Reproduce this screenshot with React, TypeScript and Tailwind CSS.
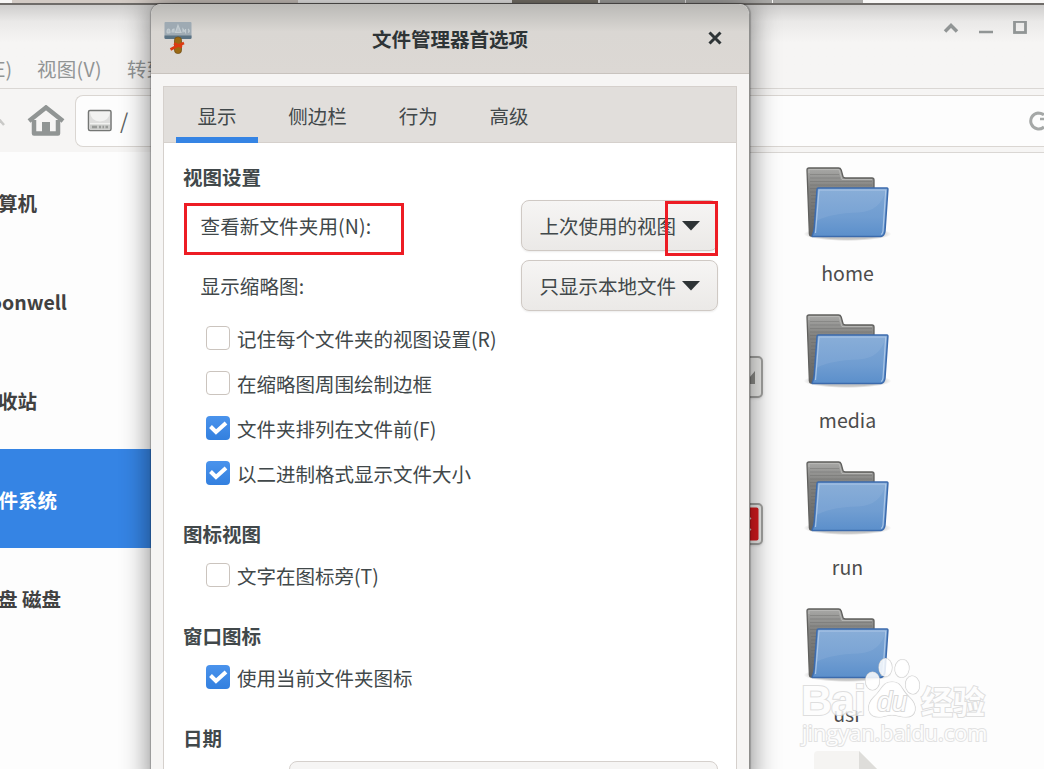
import type { ReactNode } from 'react';

type Place = {
  label: string;
  width: string;
  selected?: boolean;
};

const places: Place[] = [
  { label: '算机', width: 'w-[37px]' },
  { label: 'oonwell', width: 'w-[67px]' },
  { label: '收站', width: 'w-[37px]' },
  { label: '件系统', width: 'w-[57px]', selected: true },
  { label: '盘 磁盘', width: 'w-[61px]' },
];

type Emblem = 'link' | 'denied' | null;

// emblem belongs to the item left of the folder, one row down
const folders: { name: string; emblem: Emblem }[] = [
  { name: 'home', emblem: 'link' },
  { name: 'media', emblem: 'denied' },
  { name: 'run', emblem: null },
  { name: 'usr', emblem: null },
];

const tabs = ['显示', '侧边栏', '行为', '高级'];

function FolderIcon() {
  return (
    <svg width="90" height="80" viewBox="0 0 90 80" aria-hidden="true">
      <defs>
        <linearGradient id="folder-back" x1="0" y1="0" x2="0" y2="1">
          <stop offset="0" stopColor="#a9a9a7" />
          <stop offset="0.3" stopColor="#828280" />
          <stop offset="1" stopColor="#646462" />
        </linearGradient>
        <linearGradient id="folder-front" x1="0" y1="0" x2="0" y2="1">
          <stop offset="0" stopColor="#80a8d5" />
          <stop offset="0.6" stopColor="#709dd1" />
          <stop offset="1" stopColor="#5b8fcb" />
        </linearGradient>
        <radialGradient id="folder-shadow">
          <stop offset="0.75" stopColor="#000" stopOpacity="0.22" />
          <stop offset="1" stopColor="#000" stopOpacity="0" />
        </radialGradient>
      </defs>
      <ellipse cx="44.500" cy="69" rx="44" ry="7" fill="url(#folder-shadow)" />
      <path d="M4 5Q4 3 6 3H35.500Q37.500 3 38.200 5L40 11.500Q40.500 13 42.500 13H69Q71 13 71 15V30H25L11 71H8Q6.500 71 6.400 69Z" fill="url(#folder-back)" stroke="#60605e" strokeWidth="1.300" />
      <path d="M6 8V4.500H36L39 14.500H69" fill="none" stroke="#b9b9b7" strokeWidth="0.900" />
      <path d="M7 9.500H36M7 13H37M7 16.500H69M7 20H69M7 23.500H14M7 27H14M8 30.500H13M8 34H13M8 37.500H13M8 41H13M8 44.500H12M8 48H12M8 51.500H12M9 55H12M9 58.500H12" stroke="#666664" strokeWidth="0.700" opacity="0.5" />
      <path d="M15.500 23H84Q85 23 84.900 24.500L82 66Q81.500 71 78 71.500H10Q8.500 72 9.800 69Q11 66 11.300 62L14 24.500Q14.100 23 15.500 23Z" fill="url(#folder-front)" stroke="#3c6bad" strokeWidth="1.500" />
      <path d="M16 25H82.500Q78 46 56 47.500Q28 48 13.500 56Z" fill="#fff" opacity="0.07" />
      <path d="M12.500 68L16 25H82.700L80 66Q79.500 69 78 69.500" fill="none" stroke="#b4cdea" strokeWidth="1.200" opacity="0.85" />
    </svg>
  );
}

function FolderItem({ name, emblem }: { name: string; emblem: Emblem }) {
  return (
    <div className="flex h-[147px]">
      <div className="relative w-[147px]">
        {emblem && (
          <div className="absolute top-[191px] left-[95px] flex h-[42px] w-[41px] items-center justify-end rounded-[5px] border-2 border-[#a3a3a1] bg-[#eeeeec] shadow-sm">
            {emblem === 'link' ? (
              <svg width="20" height="20" viewBox="0 0 20 20" aria-hidden="true">
                <path d="M14 4V17H3Z" fill="#8c8c89" />
              </svg>
            ) : (
              <svg width="37" height="38" viewBox="0 0 37 38" className="shrink-0" aria-hidden="true">
                <rect x="1" y="2.500" width="33.500" height="33" rx="2" fill="#d81a1e" />
                <path d="M12 12L26 26M26 12L12 26" stroke="#eeeeec" strokeWidth="4" />
              </svg>
            )}
          </div>
        )}
      </div>
      <div className="flex w-[147px] flex-col items-center">
        <FolderIcon />
        <span className="mt-[13px] flex h-[30px] items-center text-[#4c4c4c]">{name}</span>
      </div>
    </div>
  );
}

function HomeIcon() {
  return (
    <svg width="38" height="32" viewBox="0 0 38 32" aria-hidden="true">
      <path d="M2 16L19 2.500L36 16" fill="none" stroke="#919594" strokeWidth="4.500" />
      <path d="M7 15V28.500H31V15" fill="none" stroke="#919594" strokeWidth="4.500" strokeLinejoin="round" />
      <rect x="15" y="17" width="8" height="12" fill="#919594" />
    </svg>
  );
}

function DriveIcon() {
  return (
    <svg width="26" height="24" viewBox="0 0 26 24" aria-hidden="true">
      <rect x="1.500" y="1.500" width="22.500" height="20" rx="1.500" fill="#f2f2f1" stroke="#747674" strokeWidth="1.500" />
      <path d="M3 3.500Q4 12 13 12.500Q22 12 23 3.500V14H3Z" fill="#dededd" />
      <rect x="3" y="15.500" width="20" height="4.500" fill="#cacbc9" />
      <path d="M5 18H10M12 18H14M15.500 18H17M18.500 18H21" stroke="#999b99" strokeWidth="2.500" />
    </svg>
  );
}

function FileManagerIcon() {
  return (
    <svg width="30" height="36" viewBox="0 0 30 36" aria-hidden="true">
      <rect x="1.500" y="2" width="27" height="17" rx="1" fill="#9eaab3" />
      <path d="M1.500 15.500H28.500V17.500Q28.500 19 27 19H3Q1.500 19 1.500 17.500Z" fill="#5b7384" />
      <path d="M4 12.500Q4 9 5.500 9T7 12.500Q5 13.500 4 12.500M9 12.500Q9 9 11 9V12.500M12.500 12.500L15 5.500L18 12.500ZM20 12.500V9L22.500 12.500V9M25 9Q27.500 11 25 12.500" fill="#b5bfc6" stroke="#c3ccd1" strokeWidth="1.200" />
      <rect x="11.500" y="17" width="7" height="16.500" rx="3.200" fill="#9c6a13" stroke="#71501a" strokeWidth="0.800" />
      <path d="M7.500 29.500L13 26.500L21 23M11 23.500L19 27" stroke="#dc3b12" strokeWidth="2.600" fill="none" />
    </svg>
  );
}

function FileManagerWindow() {
  return (
    <div className="flex h-[764px] flex-col bg-[#f6f5f4]">
      {/* Title bar and menu bar */}
      <div className="flex h-[84px] shrink-0 flex-col border-b border-[#dad7d4] bg-linear-to-b from-[#cecdcc] via-[#eae9e8] via-20% to-[#f6f5f4] to-45% text-[#919494]">
        <div className="flex h-[45px] items-center justify-end gap-[20px] pr-[17px]">
          <svg width="16" height="12" viewBox="0 0 16 12" aria-hidden="true">
            <path d="M2 9.500L8 3.500L14 9.500" fill="none" stroke="#919595" strokeWidth="3.500" />
          </svg>
          <svg width="14" height="14" viewBox="0 0 14 14" aria-hidden="true">
            <path d="M0 11H14" stroke="#919595" strokeWidth="2.500" />
          </svg>
          <svg width="14" height="14" viewBox="0 0 14 14" aria-hidden="true">
            <rect x="1.500" y="0.500" width="11" height="11" fill="none" stroke="#919595" strokeWidth="2.800" />
          </svg>
        </div>
        <div className="flex h-[37px] items-center">
          <span className="flex w-[12px] shrink-0 justify-end whitespace-nowrap">(E)</span>
          <span className="ml-[25px] tracking-[0.3px]">视图(V)</span>
          <span className="ml-[25px]">转到(G)</span>
        </div>
      </div>

      {/* Location bar */}
      <div className="flex h-[64px] shrink-0 items-center border-b border-[#dad7d4]">
        <svg width="5" height="14" viewBox="0 0 5 14" className="shrink-0" aria-hidden="true">
          <path d="M-2 4L4 11" stroke="#c9c9c7" strokeWidth="2.500" />
        </svg>
        <div className="ml-[22px]">
          <HomeIcon />
        </div>
        <div className="ml-[10px] flex h-[52px] flex-1 items-center rounded-l-lg border-[1.5px] border-r-0 border-[#dad6d2] bg-[#fdfdfd] pl-[11px] text-[#5b5f60]">
          <DriveIcon />
          <span className="ml-[7px] text-[21px]">/</span>
          <svg width="16" height="20" viewBox="0 0 16 20" className="ml-auto" aria-hidden="true">
            <path d="M16 4Q14 2 10 2A8 8 0 1 0 16 16" fill="none" stroke="#a5a8a7" strokeWidth="3" />
            <path d="M12 8H16" stroke="#a5a8a7" strokeWidth="2.500" />
          </svg>
        </div>
      </div>

      <div className="flex flex-1 bg-[#fdfdfd]">
        <div className="-mt-px w-[300px] bg-[#fdfdfd]">
          {places.map((place) => (
            <div
              key={place.label}
              className={`flex h-[99px] items-center pt-[3px] font-bold ${
                place.selected ? 'bg-[#3584e4] text-white' : 'text-[#414141]'
              }`}
            >
              <span className={`flex justify-end whitespace-nowrap ${place.width}`}>{place.label}</span>
            </div>
          ))}
        </div>
        <div className="flex-1 overflow-hidden pt-[12px] pl-[327px]">
          {folders.map((folder) => (
            <FolderItem key={folder.name} name={folder.name} emblem={folder.emblem} />
          ))}
          <div className="-mt-[2px] ml-[185px]">
            <svg width="70" height="30" viewBox="0 0 70 30" aria-hidden="true">
              <path d="M2 30V4Q2 0 6 0H47L67 20V30Z" fill="#f5f4f2" />
              <path d="M47 0L67 20V30H47Z" fill="#deddda" />
            </svg>
          </div>
        </div>
      </div>
    </div>
  );
}

function SectionTitle({ children }: { children: ReactNode }) {
  return <h2 className="mt-[20px] flex h-[37px] items-center pb-px font-bold">{children}</h2>;
}

function CheckRow({ label, checked = false }: { label: string; checked?: boolean }) {
  return (
    <label className="flex h-[45px] items-center gap-[7px] pl-[23px]">
      <span
        className={`-mt-[2px] flex size-[24px] items-center justify-center rounded-[4px] ${
          checked ? 'bg-linear-to-b from-[#4a93ec] to-[#3380df]' : 'border-[1.5px] border-[#cbc4be] bg-white'
        }`}
      >
        {checked && (
          <svg width="20" height="16" viewBox="0 0 20 16" aria-hidden="true">
            <path d="M2.500 6.500L8 12L18 3" fill="none" stroke="#fff" strokeWidth="4" />
          </svg>
        )}
      </span>
      {label}
    </label>
  );
}

function ComboRow({ label, value }: { label: string; value: string }) {
  return (
    <div className="flex h-[51px] items-center justify-between pl-[17.5px]">
      <span className="pt-px tracking-[0.15px]">{label}</span>
      <button className="flex h-[51px] w-[197px] items-center gap-[6px] rounded-[8px] border-[1.5px] border-[#cfc9c4] bg-linear-to-b from-[#f6f5f4] to-[#ebe9e7] pt-px pl-[17.5px] shadow-[0_1px_2px_rgba(0,0,0,0.08)]">
        {value}
        <svg width="18" height="10" viewBox="0 0 18 10" className="-mt-px" aria-hidden="true">
          <path d="M0 0H18L9 9.500Z" fill="#2e3436" />
        </svg>
      </button>
    </div>
  );
}

function PreferencesDialog() {
  return (
    <div className="absolute top-[4px] left-[151px] flex h-[790px] w-[599px] flex-col rounded-t-[10px] border-r border-[#8e8e8c] bg-[#f6f5f4] text-[#41484a] shadow-[0_0_28px_2px_rgba(0,0,0,0.45),0_0_1px_1px_rgba(0,0,0,0.2)]">
      <div className="flex h-[70px] shrink-0 items-center rounded-t-[10px] border-b-[1.5px] border-[#c8c3be] bg-linear-to-b from-[#bab9b6] via-[#dad7d3] via-40% to-[#dcd8d4] pr-[27px] pb-px pl-[12px]">
        <FileManagerIcon />
        <h1 className="flex-1 pt-px pr-px text-center font-bold text-[#2e3436]">文件管理器首选项</h1>
        <svg width="14" height="14" viewBox="0 0 14 14" aria-hidden="true">
          <path d="M1.500 1.500L12.500 12.500M12.500 1.500L1.500 12.500" stroke="#2e3436" strokeWidth="3" />
        </svg>
      </div>

      <div className="mx-[12px] mt-[12px] flex-1 border-[1.5px] border-[#d5d0cc] bg-white">
        <div className="flex h-[56px] gap-[8.8px] border-b-[1.5px] border-[#d5d0cc] bg-[#e1dedb] pl-[12px]">
          {tabs.map((tab, i) => (
            <div
              key={tab}
              className={`flex h-[56px] items-center border-b-[6px] px-[21.5px] pt-[7px] ${
                i === 0 ? 'border-[#3584e4]' : 'border-transparent'
              }`}
            >
              {tab}
            </div>
          ))}
        </div>

        <div className="pr-[18px] pl-[19px]">
          <h2 className="mt-[13px] flex h-[44px] items-center pb-[3px] font-bold">视图设置</h2>
          <div className="flex flex-col gap-[9px]">
            <ComboRow label="查看新文件夹用(N):" value="上次使用的视图" />
            <ComboRow label="显示缩略图:" value="只显示本地文件" />
          </div>
          <div className="mt-[5px]">
            <CheckRow label="记住每个文件夹的视图设置(R)" />
            <CheckRow label="在缩略图周围绘制边框" />
            <CheckRow label="文件夹排列在文件前(F)" checked />
            <CheckRow label="以二进制格式显示文件大小" checked />
          </div>
          <SectionTitle>图标视图</SectionTitle>
          <CheckRow label="文字在图标旁(T)" />
          <SectionTitle>窗口图标</SectionTitle>
          <CheckRow label="使用当前文件夹图标" checked />
          <SectionTitle>日期</SectionTitle>
          <div className="mt-[4px] ml-[106px] h-[40px] rounded-[8px] border-[1.5px] border-[#d5d0cc] bg-[#f6f5f4]" />
        </div>
      </div>
    </div>
  );
}

function Watermark() {
  return (
    <div className="absolute top-[656px] left-[801px] h-[96px] w-[190px] leading-none text-[#fdfdfd] [paint-order:stroke_fill] [-webkit-text-stroke:2px_#d9d9d9]">
      <span className="absolute top-[23px] left-0 font-['Liberation_Sans'] text-[43px] font-bold tracking-[-1px] opacity-85">Bai</span>
      <svg width="62" height="64" viewBox="0 0 62 64" className="absolute top-0 left-[59px]" aria-hidden="true">
        <g fill="#fff" fillOpacity="0.85" stroke="#d0d0d0" strokeWidth="1.200">
          <ellipse cx="12.500" cy="25" rx="7" ry="9" />
          <ellipse cx="25.500" cy="11.500" rx="6.500" ry="9" />
          <ellipse cx="42" cy="12.500" rx="7" ry="9" transform="rotate(8 42 12.500)" />
          <ellipse cx="52.500" cy="29" rx="7" ry="9" transform="rotate(-6 52.500 29)" />
          <path d="M32 26C42 26 41 34 49 41C59 50 56 61 46 61C39 61 38 59 32 59C26 59 25 61 19 61C8 61 5 50 14 41C22 34 22 26 32 26Z" />
        </g>
      </svg>
      <span className="absolute top-[33px] left-[76px] font-['Liberation_Sans'] text-[27px] italic">du</span>
      <span className="absolute top-[28px] left-[120px] text-[32px] font-bold opacity-85">经验</span>
      <span className="absolute top-[66px] left-px font-['Open_Sans'] text-[21.8px] whitespace-nowrap opacity-75">jingyan.baidu.com</span>
    </div>
  );
}

export default function App() {
  return (
    <div className="relative h-[769px] w-[1044px] overflow-hidden bg-white font-['Noto_Sans_CJK_SC',sans-serif] text-[19.5px] leading-none">
      {/* Desktop panel */}
      <div className="flex h-[5px] border-b-2 border-[#6f6c69] bg-[#f8f7f6]">
        <div className="ml-[12px] w-[286px] bg-[#d2cac4]" />
        <div className="ml-[214px] w-[86px] bg-[#7d786f]" />
        <div className="ml-[2px] w-[85px] bg-[#aaa9a7]" />
        <div className="ml-px w-[86px] bg-[#aaa9a7]" />
        <div className="ml-px w-[90px] bg-[#aaa9a7]" />
      </div>
      <FileManagerWindow />
      <PreferencesDialog />
      <Watermark />

      {/* Callout frames */}
      <div className="absolute top-[203px] left-[184px] h-[52px] w-[220px] border-3 border-[#ed1c24]" />
      <div className="absolute top-[201px] left-[665px] h-[55px] w-[53px] border-3 border-[#ed1c24]" />
    </div>
  );
}
